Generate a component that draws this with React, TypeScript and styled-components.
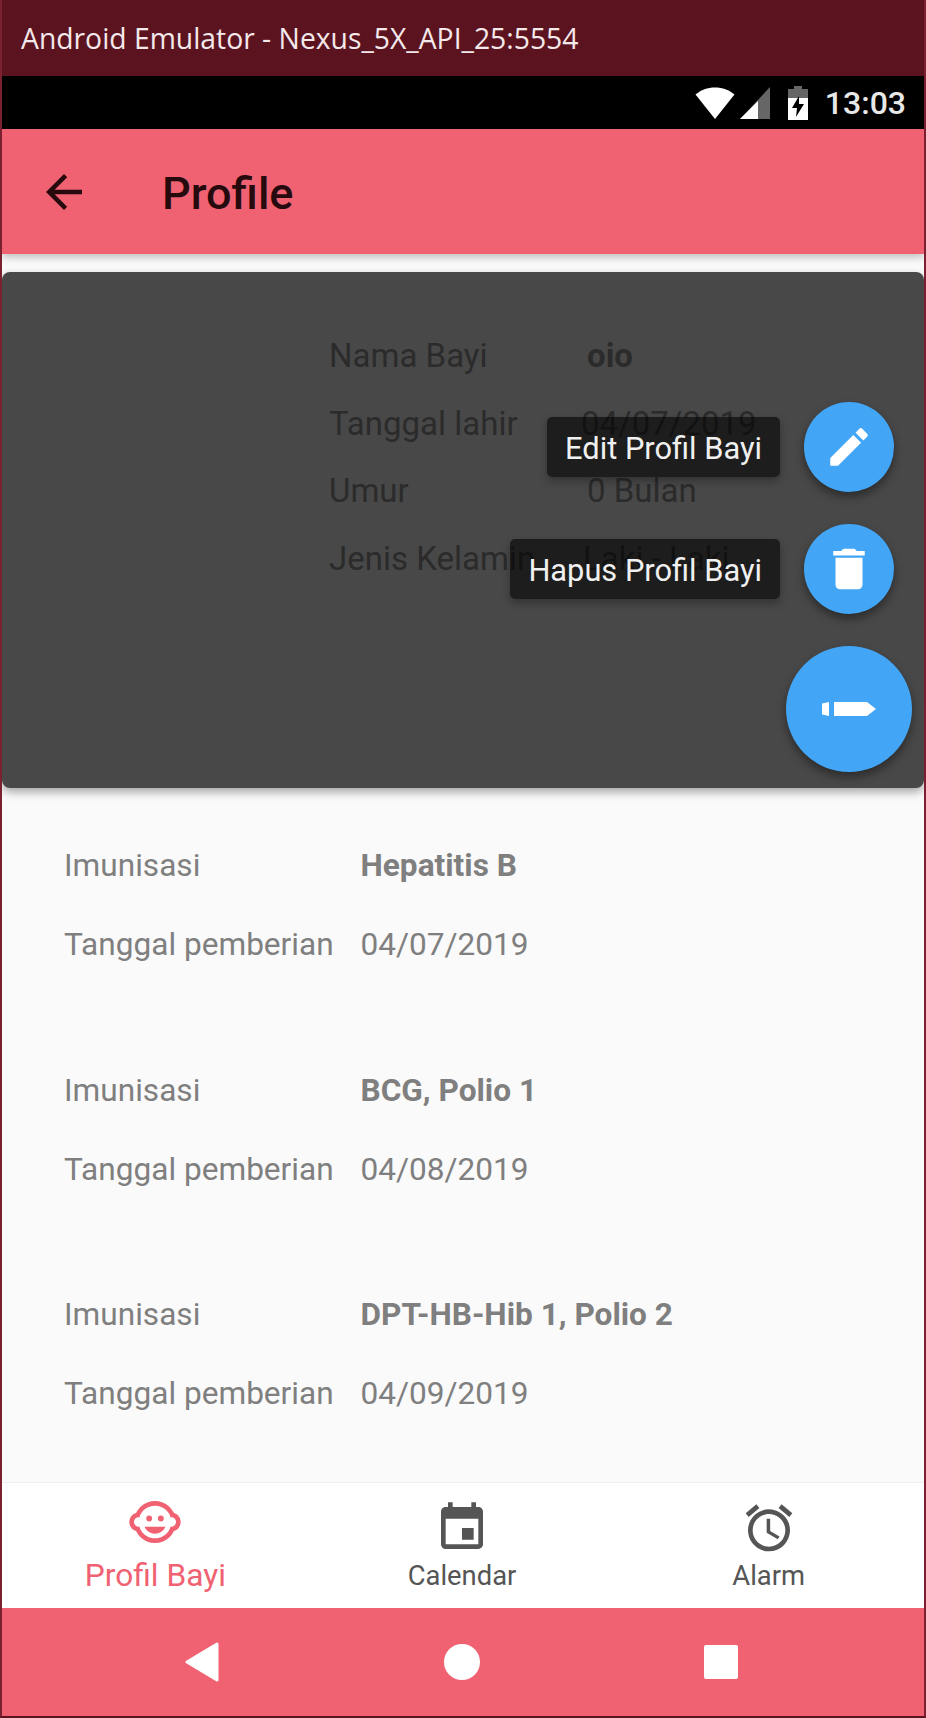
import styled, { createGlobalStyle } from "styled-components";
import {
  MdAccessAlarm,
  MdArrowBack,
  MdChildCare,
  MdDelete,
  MdEdit,
  MdEvent,
} from "react-icons/md";

const GlobalStyle = createGlobalStyle`
  html, body {
    margin: 0;
    padding: 0;
    background: #fafafa;
  }
  * {
    box-sizing: border-box;
  }
`;

const Window = styled.div`
  width: 926px;
  height: 1718px;
  display: flex;
  flex-direction: column;
  overflow: hidden;
  border-left: 2px solid #7a2031;
  border-right: 2px solid #7a2031;
  border-bottom: 2px solid #5c1320;
  font-family: Roboto, "Liberation Sans", sans-serif;
`;

const TitleBar = styled.div`
  height: 76px;
  flex: none;
  margin: 0 -2px;
  padding-left: 21px;
  display: flex;
  align-items: center;
  background: #5c1320;
  color: #f4e9ea;
  font-family: "Open Sans", "Liberation Sans", sans-serif;
  font-size: 28.3px;
`;

const StatusBar = styled.div`
  height: 53px;
  flex: none;
  margin: 0 -2px;
  padding-right: 20px;
  display: flex;
  align-items: center;
  justify-content: flex-end;
  background: #000;
  color: #e8e8e8;
  font-size: 32px;
  font-weight: 500;

  svg {
    display: block;
  }
`;

const StatusIcons = styled.div`
  display: flex;
  align-items: center;
  gap: 5px;
  margin-right: 16px;
`;

const AppBar = styled.header`
  height: 125px;
  flex: none;
  padding-left: 35px;
  display: flex;
  align-items: center;
  background: #f06272;
  color: #260a0e;
  box-shadow: 0 3px 8px rgba(0, 0, 0, 0.25);
  position: relative;
  z-index: 2;
`;

const AppTitle = styled.h1`
  margin: 4px 0 0 71px;
  font-size: 45px;
  font-weight: 500;
`;

const Content = styled.main`
  flex: 1;
  min-height: 0;
  padding-top: 18px;
  background: #fafafa;
`;

const ProfileCard = styled.section`
  position: relative;
  height: 516px;
  padding: 50px 0 0 327px;
  border-radius: 8px;
  background: #484848;
  color: #2b2b2b;
  box-shadow: 0 4px 10px rgba(0, 0, 0, 0.35);
`;

const InfoGrid = styled.dl`
  margin: 0;
  display: grid;
  grid-template-columns: 258px auto;
  grid-auto-rows: 67.5px;
  align-items: center;
  font-size: 33px;
`;

const Label = styled.dt`
  margin: 0;
  white-space: nowrap;
`;

const Value = styled.dd<{ $bold?: boolean; $nudge?: number }>`
  margin: 0 0 0 ${(p) => p.$nudge ?? 0}px;
  white-space: nowrap;
  font-weight: ${(p) => (p.$bold ? 700 : 400)};
`;

const SpeedDial = styled.div`
  position: absolute;
  top: 130px;
  right: 12px;
  width: 126px;
  display: flex;
  flex-direction: column;
  align-items: center;
  gap: 32px;
`;

const Fab = styled.div<{ $large?: boolean }>`
  position: relative;
  width: ${(p) => (p.$large ? 126 : 90)}px;
  height: ${(p) => (p.$large ? 126 : 90)}px;
  border-radius: 50%;
  display: flex;
  align-items: center;
  justify-content: center;
  background: #42a5f5;
  color: #fff;
  box-shadow: 0 5px 10px rgba(0, 0, 0, 0.4);
`;

const FabLabel = styled.span`
  position: absolute;
  right: 114px;
  top: 15px;
  height: 60px;
  padding: 3px 18px 0;
  display: flex;
  align-items: center;
  white-space: nowrap;
  border-radius: 5px;
  background: rgba(2, 2, 2, 0.6);
  color: #f0f0f0;
  font-size: 30.8px;
  box-shadow: 0 4px 8px rgba(0, 0, 0, 0.3);
`;

const ImmunizationList = styled.div`
  padding: 38px 0 0 62px;
  display: flex;
  flex-direction: column;
  gap: 66.7px;
`;

const ImmunizationGrid = styled(InfoGrid)`
  grid-template-columns: 296.5px auto;
  grid-auto-rows: 79px;
  color: #7f7f7f;
  font-size: 31.6px;
`;

const BottomNav = styled.nav`
  height: 126px;
  flex: none;
  padding-right: 2px;
  display: grid;
  grid-template-columns: repeat(3, 1fr);
  background: #fff;
  border-top: 1px solid #eeeeee;
  position: relative;
`;

const Tab = styled.div<{ $active?: boolean }>`
  padding-top: 15px;
  display: flex;
  flex-direction: column;
  align-items: center;
  color: ${(p) => (p.$active ? "#f06272" : "#555")};
  font-size: ${(p) => (p.$active ? 31.7 : 27.4)}px;
  line-height: 36px;

  svg {
    display: block;
    margin: ${(p) => (p.$active ? "-4px 0 8px" : "2px 0 2px")};
  }
`;

const NavBar = styled.div`
  height: 108px;
  flex: none;
  padding-right: 3px;
  display: grid;
  grid-template-columns: repeat(3, 259.5px);
  justify-content: center;
  background: #f06272;
  color: #fff;
`;

const NavSlot = styled.div`
  display: flex;
  align-items: center;
  justify-content: center;
`;

function StatusIconRow() {
  return (
    <StatusIcons>
      <svg width="40" height="32" viewBox="0 0 40 32">
        <path d="M20 32 0.5 7.5C6 3 12.5 0.5 20 0.5S34 3 39.5 7.5Z" fill="#fff" />
      </svg>
      <svg width="30" height="32" viewBox="0 0 30 32">
        <path d="M30 0V32H0Z" fill="#666" />
        <path d="M18 14V32H0Z" fill="#fff" />
      </svg>
      <svg width="22" height="34" viewBox="0 0 22 34" style={{ marginLeft: 12 }}>
        <path d="M7 0h8v3h6v9H1V3h6Z" fill="#666" />
        <path d="M1 12h20v22H1Z" fill="#fff" />
        <path d="M12 10 5 22h5l-1 9 8-13h-5Z" fill="#000" />
      </svg>
    </StatusIcons>
  );
}

const immunizations = [
  { name: "Hepatitis B", date: "04/07/2019" },
  { name: "BCG, Polio 1", date: "04/08/2019" },
  { name: "DPT-HB-Hib 1, Polio 2", date: "04/09/2019" },
];

export default function App() {
  return (
    <Window>
      <GlobalStyle />
      <TitleBar>Android Emulator - Nexus_5X_API_25:5554</TitleBar>
      <StatusBar>
        <StatusIconRow />
        13:03
      </StatusBar>
      <AppBar>
        <MdArrowBack size={54} />
        <AppTitle>Profile</AppTitle>
      </AppBar>
      <Content>
        <ProfileCard>
          <InfoGrid>
            <Label>Nama Bayi</Label>
            <Value $bold>oio</Value>
            <Label>Tanggal lahir</Label>
            <Value $nudge={-6}>04/07/2019</Value>
            <Label>Umur</Label>
            <Value>0 Bulan</Value>
            <Label>Jenis Kelamin</Label>
            <Value $nudge={-4}>Laki - Laki</Value>
          </InfoGrid>
          <SpeedDial>
            <Fab>
              <FabLabel>Edit Profil Bayi</FabLabel>
              <MdEdit size={50} />
            </Fab>
            <Fab>
              <FabLabel>Hapus Profil Bayi</FabLabel>
              <MdDelete size={54} />
            </Fab>
            <Fab $large>
              <svg width="54" height="14" viewBox="0 0 54 14">
                <path d="M0 1.5 7 0v14l-7-1.5Z" fill="#fff" />
                <path d="M12 0h33l9 7-9 7H12Z" fill="#fff" />
              </svg>
            </Fab>
          </SpeedDial>
        </ProfileCard>
        <ImmunizationList>
          {immunizations.map((item) => (
            <ImmunizationGrid key={item.name}>
              <Label>Imunisasi</Label>
              <Value $bold>{item.name}</Value>
              <Label>Tanggal pemberian</Label>
              <Value>{item.date}</Value>
            </ImmunizationGrid>
          ))}
        </ImmunizationList>
      </Content>
      <BottomNav>
        <Tab $active>
          <MdChildCare size={56} />
          Profil Bayi
        </Tab>
        <Tab>
          <MdEvent size={56} />
          Calendar
        </Tab>
        <Tab>
          <MdAccessAlarm size={56} />
          Alarm
        </Tab>
      </BottomNav>
      <NavBar>
        <NavSlot>
          <svg width="36" height="40" viewBox="0 0 36 40">
            <path d="M33 2 3 20l30 18Z" fill="#fff" stroke="#fff" strokeWidth="3" strokeLinejoin="round" />
          </svg>
        </NavSlot>
        <NavSlot>
          <svg width="38" height="38" viewBox="0 0 38 38">
            <circle cx="19" cy="19" r="18" fill="#fff" />
          </svg>
        </NavSlot>
        <NavSlot>
          <svg width="34" height="34" viewBox="0 0 34 34">
            <rect width="34" height="34" rx="2" fill="#fff" />
          </svg>
        </NavSlot>
      </NavBar>
    </Window>
  );
}
